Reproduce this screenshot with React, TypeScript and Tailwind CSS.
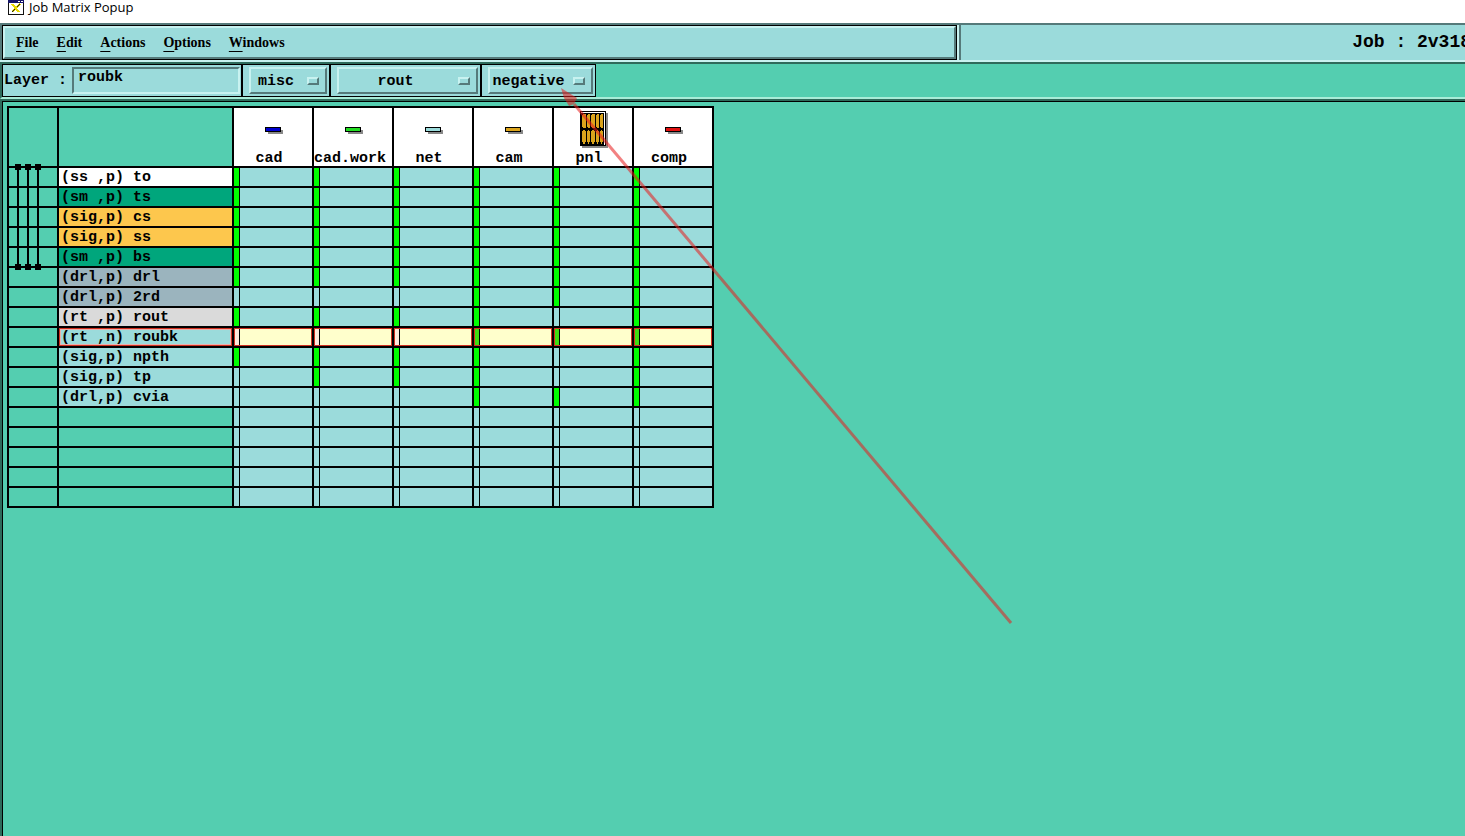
import React, { useState } from 'react';

type Layer = {
  label: string;
  color: string;
  steps: string; // one flag per step, in column order
};

const STEPS = [
  { name: 'cad', fill: '#0000d0' },
  { name: 'cad.work', fill: '#22dd22' },
  { name: 'net', fill: '#9bdbdb' },
  { name: 'cam', fill: '#dba41c' },
  { name: 'pnl', fill: '#dba41c', panel: true },
  { name: 'comp', fill: '#e01010' },
];

const LAYERS: Layer[] = [
  { label: '(ss ,p) to', color: 'bg-white', steps: '111111' },
  { label: '(sm ,p) ts', color: 'bg-[#00a67c]', steps: '111111' },
  { label: '(sig,p) cs', color: 'bg-[#fdc74d]', steps: '111111' },
  { label: '(sig,p) ss', color: 'bg-[#fdc74d]', steps: '111111' },
  { label: '(sm ,p) bs', color: 'bg-[#00a67c]', steps: '111111' },
  { label: '(drl,p) drl', color: 'bg-[#9bb4be]', steps: '111111' },
  { label: '(drl,p) 2rd', color: 'bg-[#9bb4be]', steps: '000111' },
  { label: '(rt ,p) rout', color: 'bg-[#dadada]', steps: '111101' },
  { label: '(rt ,n) roubk', color: 'bg-[#9bdbdb]', steps: '000111' },
  { label: '(sig,p) npth', color: 'bg-[#9bdbdb]', steps: '111101' },
  { label: '(sig,p) tp', color: 'bg-[#9bdbdb]', steps: '011101' },
  { label: '(drl,p) cvia', color: 'bg-[#9bdbdb]', steps: '000111' },
  ...Array.from({ length: 5 }, () => ({ label: '', color: '', steps: '000000' })),
];

const MENUS = ['File', 'Edit', 'Actions', 'Options', 'Windows'];
const RAISED = 'border-2 border-t-[#c8f2f0] border-l-[#c8f2f0] border-b-[#557a7a] border-r-[#557a7a]';

// x position and width of each board strip in the panel icon
const STRIPS = [
  [5, 4],
  [10, 3],
  [14, 4],
  [19, 3],
  [23, 3],
];

function StepIcon({ fill, panel }: { fill: string; panel?: boolean }) {
  if (panel) {
    return (
      <svg className="h-10 w-8 shrink-0" viewBox="0 0 32 40" shapeRendering="crispEdges" aria-hidden="true">
        <rect x="5" y="5" width="26" height="35" fill="#888" />
        <rect x="3" y="3" width="26" height="35" fill="#000" />
        <rect x="4" y="4" width="24" height="33" fill="#fff" />
        <rect x="4" y="5" width="23" height="32" fill="#000" />
        {STRIPS.map(([x, w]) => (
          <g key={x} fill={fill}>
            <rect x={x} y="7" width={w} height="12" />
            <rect x={x + 1} y="6" width={w - 1} height="14" />
            <rect x={x} y="23" width={w} height="11" />
            <rect x={x + 1} y="22" width={w - 2} height="14" />
          </g>
        ))}
      </svg>
    );
  }
  return (
    <svg className="h-10 w-8 shrink-0" viewBox="0 0 32 40" shapeRendering="crispEdges" aria-hidden="true">
      <rect x="11" y="22" width="15" height="4" fill="#888" />
      <rect x="8" y="19" width="16" height="5" fill="#000" />
      <rect x="9" y="20" width="14" height="3" fill={fill} />
    </svg>
  );
}

// Drill spans running through the physical board layers
function DrillSpans() {
  return (
    <svg className="absolute -top-1 left-1.5 h-[106px] w-[26px]" viewBox="0 0 26 106" shapeRendering="crispEdges" aria-hidden="true">
      {[0, 10, 20].map((x) => (
        <g key={x}>
          <rect x={x} y="0" width="6" height="6" />
          <rect x={x + 2} y="3" width="2" height="100" />
          <rect x={x} y="100" width="6" height="6" />
        </g>
      ))}
    </svg>
  );
}

function OptionMenu({ label, options, width }: { label: string; options: string[]; width: string }) {
  return (
    <div className="flex border-l-2 border-black bg-[#9bdbdb] py-0.5 pr-0.5 pl-1.5 last:border-r">
      <div className={`relative h-[27px] ${width}`}>
        <select
          aria-label={label}
          className={`block h-full w-full appearance-none rounded-none bg-[#9bdbdb] pt-0.5 pr-6 text-center font-bold outline-none ${RAISED}`}
        >
          {options.map((o) => (
            <option key={o}>{o}</option>
          ))}
        </select>
        <span className={`pointer-events-none absolute top-2.5 right-2 h-2 w-3 ${RAISED}`} />
      </div>
    </div>
  );
}

export default function App() {
  const [layer, setLayer] = useState('roubk');
  const [selected, setSelected] = useState(8);

  return (
    <div className="relative flex min-h-screen flex-col overflow-hidden bg-[#54ceb0] font-['Liberation_Mono',monospace] text-[15px] text-black">
      {/* Window title */}
      <header className="flex h-[23px] items-start gap-1 bg-white pl-2">
        <svg className="h-4 w-4" viewBox="0 0 16 16" shapeRendering="crispEdges" aria-hidden="true">
          <rect x="0" y="0" width="16" height="15" fill="#111" />
          <rect x="0" y="0" width="16" height="3" fill="#15156a" />
          <rect x="1" y="3" width="14" height="11" fill="#fff" />
          <rect x="10" y="1" width="2" height="1" fill="#fff" />
          <rect x="13" y="1" width="2" height="1" fill="#fff" />
          <path d="M4 4 L11 12 M12 4 L4 12" stroke="#e6d800" strokeWidth="2" />
          <path d="M4 12 L7 9 M9 7 L12 4" stroke="#222" />
        </svg>
        <h1 className="pl-px font-['Open_Sans','Noto_Sans',sans-serif] text-[13px] leading-3.5">Job Matrix Popup</h1>
      </header>

      {/* Menu bar and job name */}
      <div className="flex h-[39px] border-t-2 border-b-2 border-t-[#557a7a] border-b-[#c8f2f0] bg-[#c8f2f0]">
        <nav className="flex flex-[958] border-l-2 border-[#557a7a]">
          <div className="flex flex-1 border border-black">
            <div className={`flex flex-1 items-center gap-[18px] bg-[#9bdbdb] pl-[11px] font-['Liberation_Serif',serif] text-sm font-bold ${RAISED}`}>
              {MENUS.map((m) => (
                <button key={m} type="button">
                  <span className="underline decoration-1 underline-offset-4">{m[0]}</span>
                  {m.slice(1)}
                </button>
              ))}
            </div>
          </div>
        </nav>
        <div className="ml-0.5 flex flex-[505] items-center justify-end overflow-hidden border-l-2 border-[#557a7a] bg-[#9bdbdb]">
          <span className="-mr-1.5 pb-0.5 text-lg font-bold whitespace-pre">Job : 2v318</span>
        </div>
      </div>

      {/* Layer attributes */}
      <div className="flex h-[37px] border-t-2 border-b-2 border-l-2 border-t-[#2e6b5b] border-b-[#a8ecd8] border-l-[#2e6b5b]">
        <div className="flex border-y border-l border-black font-bold">
          <div className="flex items-center bg-[#9bdbdb] pr-px pl-px">
            <label htmlFor="layer" className="w-[68px] pt-0.5 whitespace-pre">
              Layer :
            </label>
            <input
              id="layer"
              value={layer}
              onChange={(e) => setLayer(e.target.value)}
              className="h-[27px] w-[168px] border-2 border-t-[#557a7a] border-r-[#c8f2f0] border-b-[#c8f2f0] border-l-[#557a7a] bg-[#9bdbdb] pb-1.5 pl-1 outline-none"
            />
          </div>
          <OptionMenu label="Context" options={['misc', 'board']} width="w-[78px]" />
          <OptionMenu label="Type" options={['rout', 'signal', 'drill']} width="w-[141px]" />
          <OptionMenu label="Polarity" options={['negative', 'positive']} width="w-[105px]" />
        </div>
      </div>

      {/* Matrix */}
      <main className="flex flex-1 border-t-2 border-l-2 border-[#2e6b5b]">
        <div className="flex-1 border-t border-l border-black p-1">
          <table className="w-[707px] table-fixed border-collapse font-bold">
            <colgroup>
              <col className="w-[50px]" />
              <col className="w-[175px]" />
              {STEPS.map((s) => (
                <col key={s.name} className="w-20" />
              ))}
            </colgroup>
            <thead>
              <tr className="h-[60px]">
                <td className="border-2 border-black p-0" />
                <td className="border-2 border-black p-0" />
                {STEPS.map((s) => (
                  <th key={s.name} scope="col" className="border-2 border-black bg-white p-0 align-top">
                    <div className="flex h-[58px] flex-col items-center">
                      <StepIcon fill={s.fill} panel={s.panel} />
                      <span className="w-full pr-2 leading-[22px]">{s.name}</span>
                    </div>
                  </th>
                ))}
              </tr>
            </thead>
            <tbody>
              {LAYERS.map((l, row) => {
                const active = row === selected;
                return (
                  <tr key={row} className="h-5" onClick={() => l.label && setSelected(row)}>
                    <td className="border-2 border-black p-0">
                      {row === 0 && (
                        <div className="relative h-[18px]">
                          <DrillSpans />
                        </div>
                      )}
                    </td>
                    <th scope="row" className={`border-2 border-black p-0 text-left ${l.color}`}>
                      <div
                        className={`flex h-[18px] items-center border pt-0.5 pl-px whitespace-pre ${
                          active ? 'border-[#d03020] inset-ring inset-ring-[#eab0aa]' : 'border-transparent'
                        }`}
                      >
                        {l.label}
                      </div>
                    </th>
                    {STEPS.map((s, i) => {
                      const on = l.steps[i] === '1';
                      return (
                        <td key={s.name} className={`border-2 border-black p-0 ${active ? 'bg-[#ffffcc]' : 'bg-[#9bdbdb]'}`}>
                          <div className={`flex h-[18px] ${active ? 'border border-[#d03020]' : ''}`}>
                            <span
                              className={`border-r border-black ${active ? 'w-[5px]' : 'w-1.5'} ${
                                on ? (active ? 'bg-[#3fdd10]' : 'bg-[#00ff00]') : active ? 'bg-[#ffeadc]' : ''
                              }`}
                            />
                          </div>
                        </td>
                      );
                    })}
                  </tr>
                );
              })}
            </tbody>
          </table>
        </div>
      </main>

      {/* Pointer to the polarity menu */}
      <svg
        className="pointer-events-none absolute top-20 left-[550px] h-[550px] w-[470px]"
        viewBox="0 0 470 550"
        aria-hidden="true"
      >
        <g opacity="0.55">
          <path d="M24 24 L461 543" stroke="#e81c1c" strokeWidth="3" fill="none" />
          <path d="M11 8 L27 18 L24 24 L19 26 L14 18 Z" fill="#e81c1c" />
        </g>
      </svg>
    </div>
  );
}
